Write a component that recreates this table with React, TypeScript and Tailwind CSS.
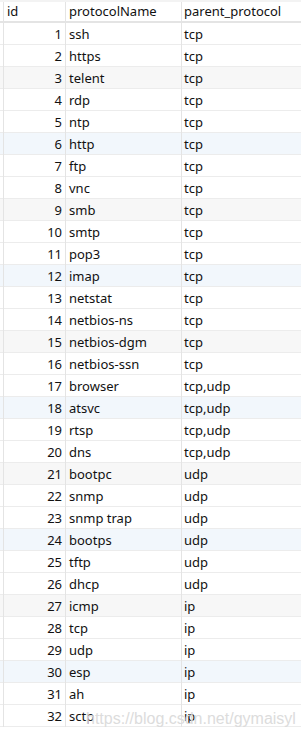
const rows: [number, string, string][] = [
  [1, 'ssh', 'tcp'],
  [2, 'https', 'tcp'],
  [3, 'telent', 'tcp'],
  [4, 'rdp', 'tcp'],
  [5, 'ntp', 'tcp'],
  [6, 'http', 'tcp'],
  [7, 'ftp', 'tcp'],
  [8, 'vnc', 'tcp'],
  [9, 'smb', 'tcp'],
  [10, 'smtp', 'tcp'],
  [11, 'pop3', 'tcp'],
  [12, 'imap', 'tcp'],
  [13, 'netstat', 'tcp'],
  [14, 'netbios-ns', 'tcp'],
  [15, 'netbios-dgm', 'tcp'],
  [16, 'netbios-ssn', 'tcp'],
  [17, 'browser', 'tcp,udp'],
  [18, 'atsvc', 'tcp,udp'],
  [19, 'rtsp', 'tcp,udp'],
  [20, 'dns', 'tcp,udp'],
  [21, 'bootpc', 'udp'],
  [22, 'snmp', 'udp'],
  [23, 'snmp trap', 'udp'],
  [24, 'bootps', 'udp'],
  [25, 'tftp', 'udp'],
  [26, 'dhcp', 'udp'],
  [27, 'icmp', 'ip'],
  [28, 'tcp', 'ip'],
  [29, 'udp', 'ip'],
  [30, 'esp', 'ip'],
  [31, 'ah', 'ip'],
  [32, 'sctp', 'ip'],
]

function rowBg(id: number) {
  if (id % 6 === 3) return 'bg-[#f7f7f7]'
  if (id % 6 === 0) return 'bg-[#f2f7fc]'
  return 'bg-white'
}

export default function App() {
  return (
    <div className="relative w-[301px] h-[744px] bg-white overflow-hidden text-[13px] text-[#111]" style={{ fontFamily: '"Noto Sans", "Liberation Sans", sans-serif' }}>
      <div className="h-[2px] bg-[#f3f3f3]" />
      <div className="grid grid-cols-[4px_62px_116px_1fr] h-[21px] border-b-2 border-[#e4e4e4] leading-[19px]">
        <div className="border-r border-[#e4e4e4]" />
        <div className="border-r border-[#e4e4e4] pl-[3px]">id</div>
        <div className="border-r border-[#e4e4e4] pl-[3px]">protocolName</div>
        <div className="pl-[2px]">parent_protocol</div>
      </div>
      {rows.map(([id, name, parent]) => (
        <div key={id} className={`grid grid-cols-[4px_62px_116px_1fr] h-[22px] border-b border-[#ececec] leading-[22px] ${rowBg(id)}`}>
          <div className="border-r border-[#e4e4e4]" />
          <div className="border-r border-[#e4e4e4] text-right pr-[3px]">{id}</div>
          <div className="border-r border-[#e4e4e4] pl-[3px]">{name}</div>
          <div className="pl-[2px]">{parent}</div>
        </div>
      ))}
      <div className="absolute left-[86px] top-[707px] text-[16px] text-[#dcdcdc]" style={{ fontFamily: '"Liberation Sans", Arial, sans-serif' }}>
        https://blog.csdn.net/gymaisyl
      </div>
    </div>
  )
}
